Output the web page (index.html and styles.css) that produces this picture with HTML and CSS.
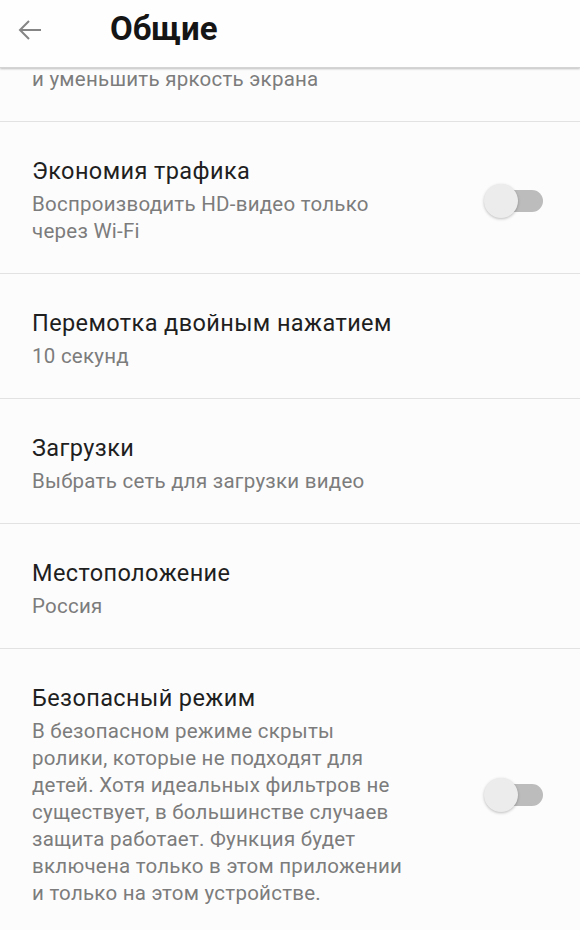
FILE: index.html
```html
<!DOCTYPE html>
<html lang="ru">
<head>
<meta charset="utf-8">
<link rel="stylesheet" href="styles.css">
</head>
<body>
<header class="topbar">
  <svg class="back" width="26" height="22" viewBox="0 0 26 22"><path d="M24 11H3M12 2L3 11l9 9" fill="none" stroke="#858585" stroke-width="2"/></svg>
  <h1 class="title">Общие</h1>
</header>
<main class="list">
  <div class="row partial">
    <div class="text"><div class="sub">и уменьшить яркость экрана</div></div>
  </div>
  <div class="row">
    <div class="text">
      <div class="name">Экономия трафика</div>
      <div class="sub">Воспроизводить HD-видео только<br>через Wi-Fi</div>
    </div>
    <div class="switch"><span class="knob"></span></div>
  </div>
  <div class="row">
    <div class="text">
      <div class="name">Перемотка двойным нажатием</div>
      <div class="sub">10 секунд</div>
    </div>
  </div>
  <div class="row">
    <div class="text">
      <div class="name">Загрузки</div>
      <div class="sub">Выбрать сеть для загрузки видео</div>
    </div>
  </div>
  <div class="row">
    <div class="text">
      <div class="name">Местоположение</div>
      <div class="sub">Россия</div>
    </div>
  </div>
  <div class="row">
    <div class="text">
      <div class="name">Безопасный режим</div>
      <div class="sub">В безопасном режиме скрыты<br>ролики, которые не подходят для<br>детей. Хотя идеальных фильтров не<br>существует, в большинстве случаев<br>защита работает. Функция будет<br>включена только в этом приложении<br>и только на этом устройстве.</div>
    </div>
    <div class="switch"><span class="knob"></span></div>
  </div>
</main>
</body>
</html>
```
FILE: styles.css
```css
* { box-sizing: border-box; }
html, body { margin: 0; padding: 0; }
body {
  width: 580px;
  height: 930px;
  overflow: hidden;
  background: #fcfcfc;
  font-family: Roboto, "Noto Sans", sans-serif;
}
.topbar {
  position: relative;
  z-index: 2;
  height: 68px;
  display: flex;
  align-items: center;
  background: #fefefe;
  box-shadow: 0 1px 2px rgba(0,0,0,0.25);
  border-bottom: 1px solid #d4d4d4;
}
.back { margin-left: 17px; margin-top: -8px; }
.title {
  margin: 0 0 0 67px;
  margin-top: -10px;
  font-size: 33px;
  font-weight: 700;
  color: #151515;
  letter-spacing: 0;
}
.row {
  display: flex;
  align-items: center;
  padding: 34px 37px 28px 32px;
  border-bottom: 1px solid #e2e2e2;
}
.row.partial { padding-top: 0; margin-top: -2px; }
.text { flex: 1; display: flex; flex-direction: column; gap: 5px; }
.name {
  font-size: 23.5px;
  line-height: 30px;
  letter-spacing: 0.4px;
  color: #1f1f1f;
}
.sub {
  font-size: 20.5px;
  line-height: 27px;
  letter-spacing: 0.25px;
  color: #7c7c7c;
}
.switch {
  position: relative;
  width: 40px;
  height: 22px;
  border-radius: 11px;
  background: #bcbcbc;
  margin-left: 20px;
}
.knob {
  position: absolute;
  left: -19px;
  top: -6px;
  width: 34px;
  height: 34px;
  border-radius: 50%;
  background: #ececec;
  box-shadow: 0 1px 3px rgba(0,0,0,0.25);
}
```
